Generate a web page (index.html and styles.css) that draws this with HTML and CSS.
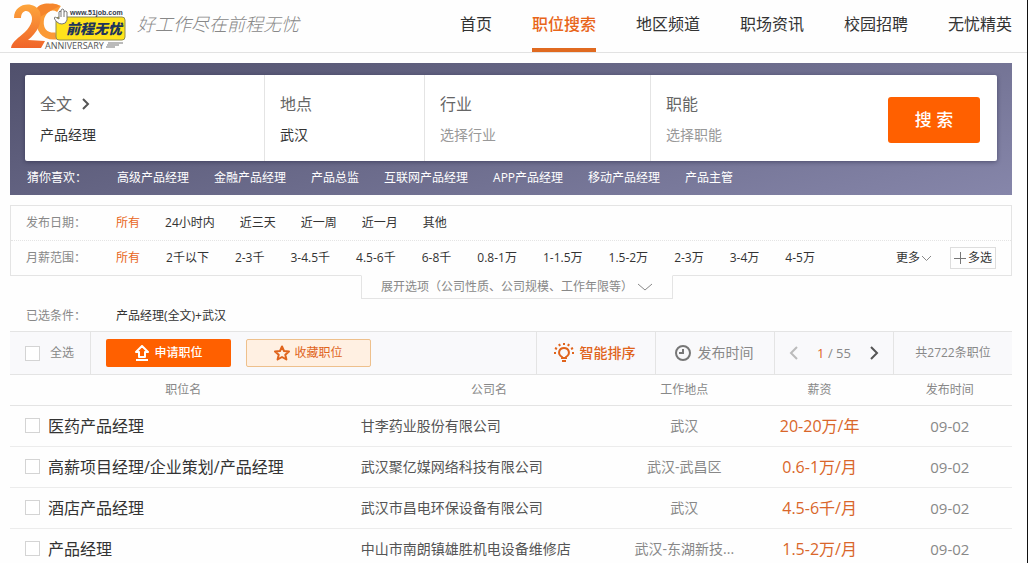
FILE: index.html
```html
<!DOCTYPE html>
<html lang="zh-CN">
<head>
<meta charset="utf-8">
<meta name="viewport" content="width=device-width, initial-scale=1">
<title>职位搜索 - 前程无忧</title>
<link rel="stylesheet" href="styles.css">
</head>
<body>
<header class="header">
  <a class="brand" href="#">
    <svg class="logo" viewBox="0 0 118 52" role="img" aria-label="前程无忧 20 ANNIVERSARY">
      <defs>
        <linearGradient id="ribbon" x1="0" y1="0" x2="0" y2="1">
          <stop offset="0" stop-color="#fda53c"/>
          <stop offset="1" stop-color="#f0642a"/>
        </linearGradient>
      </defs>
      <path d="M49 9C41 4 34 9 31 17C28 29 34 37 46 36" fill="none" stroke="#fb9a36" stroke-width="7"/>
      <path d="M26 9C30 3 40 2 50 6L42 10L30 17Z" fill="#f5852c"/>
      <path d="M4 18C4 3 24 0 30 12C33 22 27 33 18 40L35 41L31 48L1 48C2 41 9 38 15 32C22 25 24 18 20 13C17 9 11 11 11 18Z" fill="url(#ribbon)"/>
      <rect x="46" y="17" width="69" height="23" rx="3" fill="#ffe31b" stroke="#8e8a52"/>
      <path d="M47 22C43 18 44 16 47 18L49 19V12Q50 10 51 12V10Q53 8 54 10V12Q56 10 57 12V20Q56 24 52 24Q49 24 47 22Z" fill="#fff" stroke="#777" stroke-width="1"/>
      <path d="M51 12V17M54 12V17" stroke="#777"/>
      <text class="logo-url" x="60" y="15">www.51job.com</text>
      <text class="logo-name" x="56" y="34">前程无忧</text>
      <text class="logo-year" x="35" y="49">ANNIVERSARY</text>
      <path d="M98 43H113M97 45H109M96 47H105" stroke="#777" stroke-width="1"/>
    </svg>
    <span class="slogan">好工作尽在前程无忧</span>
  </a>
  <nav class="nav">
    <a href="#">首页</a>
    <a class="active" href="#">职位搜索</a>
    <a href="#">地区频道</a>
    <a href="#">职场资讯</a>
    <a href="#">校园招聘</a>
    <a href="#">无忧精英</a>
  </nav>
</header>

<main class="main">
  <section class="banner">
    <form class="search">
      <div class="field">
        <label for="keyword">全文
          <svg class="chevron" viewBox="0 0 8 12" aria-hidden="true"><path d="M1 1L6 6L1 11" fill="none" stroke="#555" stroke-width="2"/></svg>
        </label>
        <input id="keyword" type="text" value="产品经理">
      </div>
      <div class="field">
        <label for="place">地点</label>
        <input id="place" type="text" value="武汉">
      </div>
      <div class="field">
        <label for="trade">行业</label>
        <input id="trade" type="text" placeholder="选择行业">
      </div>
      <div class="field">
        <label for="role">职能</label>
        <input id="role" type="text" placeholder="选择职能">
      </div>
      <button class="search-button" type="button">搜 索</button>
    </form>
    <div class="suggest">
      <span class="suggest-title">猜你喜欢：</span>
      <a href="#">高级产品经理</a>
      <a href="#">金融产品经理</a>
      <a href="#">产品总监</a>
      <a href="#">互联网产品经理</a>
      <a href="#">APP产品经理</a>
      <a href="#">移动产品经理</a>
      <a href="#">产品主管</a>
    </div>
  </section>

  <section class="filters">
    <div class="filter-row">
      <span class="filter-title">发布日期：</span>
      <div class="options">
        <a class="chosen" href="#">所有</a>
        <a href="#">24小时内</a>
        <a href="#">近三天</a>
        <a href="#">近一周</a>
        <a href="#">近一月</a>
        <a href="#">其他</a>
      </div>
    </div>
    <div class="filter-row">
      <span class="filter-title">月薪范围：</span>
      <div class="options salary">
        <a class="chosen" href="#">所有</a>
        <a href="#">2千以下</a>
        <a href="#">2-3千</a>
        <a href="#">3-4.5千</a>
        <a href="#">4.5-6千</a>
        <a href="#">6-8千</a>
        <a href="#">0.8-1万</a>
        <a href="#">1-1.5万</a>
        <a href="#">1.5-2万</a>
        <a href="#">2-3万</a>
        <a href="#">3-4万</a>
        <a href="#">4-5万</a>
      </div>
      <button class="more" type="button">更多<svg viewBox="0 0 12 8" aria-hidden="true"><path d="M2 2L6.500 6.500L11 2" fill="none" stroke="#888"/></svg></button>
      <button class="multi" type="button"><svg viewBox="0 0 12 12" aria-hidden="true"><path d="M6.500 0V12M0 6.500H12" stroke="#777"/></svg>多选</button>
    </div>
  </section>
  <div class="expand-wrap">
    <button class="expand" type="button">展开选项（公司性质、公司规模、工作年限等）<svg viewBox="0 0 16 10" aria-hidden="true"><path d="M1 2L8 8L15 2" fill="none" stroke="#888"/></svg></button>
  </div>

  <div class="selected">
    <span class="filter-title">已选条件：</span>
    <span>产品经理(全文)+武汉</span>
  </div>

  <section class="toolbar">
    <label class="select-all"><input class="check" type="checkbox">全选</label>
    <div class="actions">
      <button class="apply" type="button"><svg viewBox="0 0 16 16" aria-hidden="true"><path d="M8 1L14 7H11V12H5V7H2Z" fill="none" stroke="#fff" stroke-width="2" stroke-linejoin="round"/><path d="M2 15H14" stroke="#fff" stroke-width="2"/></svg>申请职位</button>
      <button class="save" type="button"><svg viewBox="0 0 16 16" aria-hidden="true"><path d="M8 1.500L10 6L15 6.500L11.300 9.800L12.400 14.500L8 12L3.600 14.500L4.700 9.800L1 6.500L6 6Z" fill="none" stroke="#e0641c" stroke-width="2" stroke-linejoin="round"/></svg>收藏职位</button>
    </div>
    <button class="tool smart" type="button"><svg class="icon-bulb" viewBox="0 0 20 20" aria-hidden="true"><g fill="none" stroke="#e0641c" stroke-width="2"><path d="M8 15V14C3 11 5 5 10 5S17 11 12 14V15Z"/><path d="M8 18H12M10 0V2M5 1L6 3M15 1L14 3M1 5L3 6M19 5L17 6M0 10H2M18 10H20"/></g></svg>智能排序</button>
    <button class="tool" type="button"><svg class="icon-clock" viewBox="0 0 18 18" aria-hidden="true"><circle cx="9" cy="9" r="7" fill="none" stroke="#777" stroke-width="2"/><path d="M9 5V9H5" fill="none" stroke="#777" stroke-width="2"/></svg>发布时间</button>
    <div class="tool pager">
      <button type="button" aria-label="上一页"><svg viewBox="0 0 10 16" aria-hidden="true"><path d="M8 2L2 8L8 14" fill="none" stroke="#bbb" stroke-width="2"/></svg></button>
      <span><b>1</b> / 55</span>
      <button type="button" aria-label="下一页"><svg viewBox="0 0 10 16" aria-hidden="true"><path d="M2 2L8 8L2 14" fill="none" stroke="#555" stroke-width="2"/></svg></button>
    </div>
    <div class="tool total">共2722条职位</div>
  </section>

  <table class="jobs">
    <thead>
      <tr><th class="col-title">职位名</th><th class="col-company">公司名</th><th class="col-place">工作地点</th><th class="col-pay">薪资</th><th class="col-date">发布时间</th></tr>
    </thead>
    <tbody>
      <tr>
        <td class="title"><label><input class="check" type="checkbox">医药产品经理</label></td>
        <td class="company"><a href="#">甘李药业股份有限公司</a></td>
        <td>武汉</td><td class="pay">20-20万/年</td><td class="date">09-02</td>
      </tr>
      <tr>
        <td class="title"><label><input class="check" type="checkbox">高薪项目经理/企业策划/产品经理</label></td>
        <td class="company"><a href="#">武汉聚亿媒网络科技有限公司</a></td>
        <td>武汉-武昌区</td><td class="pay">0.6-1万/月</td><td class="date">09-02</td>
      </tr>
      <tr>
        <td class="title"><label><input class="check" type="checkbox">酒店产品经理</label></td>
        <td class="company"><a href="#">武汉市昌电环保设备有限公司</a></td>
        <td>武汉</td><td class="pay">4.5-6千/月</td><td class="date">09-02</td>
      </tr>
      <tr>
        <td class="title"><label><input class="check" type="checkbox">产品经理</label></td>
        <td class="company"><a href="#">中山市南朗镇雄胜机电设备维修店</a></td>
        <td>武汉-东湖新技...</td><td class="pay">1.5-2万/月</td><td class="date">09-02</td>
      </tr>
    </tbody>
  </table>
</main>
</body>
</html>
```
FILE: styles.css
```css
* {
  box-sizing: border-box;
}

body {
  margin: 0;
  min-height: 100vh;
  border-right: 1px solid #111;
  background: #fefefe;
  color: #333;
  font: 12px/20px "Open Sans", "Noto Sans CJK SC", sans-serif;
}

a {
  color: inherit;
  text-decoration: none;
}

button,
input {
  margin: 0;
  padding: 0;
  border: 0;
  background: none;
  color: inherit;
  font: inherit;
}

svg {
  flex: none;
}

/* Header */
.header {
  display: flex;
  justify-content: space-between;
  height: 53px;
  padding: 0 15px 0 10px;
  border-bottom: 1px solid #e2e2e2;
}

.brand {
  display: flex;
  gap: 9px;
}

.logo {
  width: 118px;
  height: 52px;
}

.logo-url {
  fill: #333a4a;
  font: bold 7px "Liberation Sans", sans-serif;
}

.logo-name {
  fill: #20345c;
  font: italic 900 14px "Noto Sans CJK SC", sans-serif;
}

.logo-year {
  fill: #555;
  font: 9px "Open Sans", sans-serif;
}

.slogan {
  color: #888;
  font-size: 18px;
  font-style: italic;
  font-weight: 300;
  line-height: 48px;
}

.nav {
  display: flex;
  gap: 40px;
  font-size: 16px;
  line-height: 48px;
}

.nav .active {
  border-bottom: 4px solid #e06a20;
  color: #e8651a;
  font-weight: 500;
}

/* Search banner */
.main {
  margin: 10px 15px 0 10px;
}

.banner {
  padding: 12px 15px 0;
  background: linear-gradient(165deg, #50506c, #6b6b8b 50%, #8686aa);
}

.search {
  display: grid;
  grid-template-columns: 240fr 160fr 226fr 237fr 92px;
  height: 86px;
  padding-right: 17px;
  border-radius: 2px;
  background: #fff;
  box-shadow: 0 1px 4px rgba(30, 30, 60, 0.5);
}

.field {
  display: flex;
  flex-direction: column;
  gap: 9px;
  min-width: 0;
  padding: 17px 15px 0;
  border-right: 1px solid #e4e4e4;
}

.field:nth-child(4) {
  border-right: 0;
}

.field label {
  display: flex;
  align-items: center;
  gap: 10px;
  color: #666;
  font-size: 16px;
  line-height: 24px;
}

.field input {
  width: 100%;
  font-size: 14px;
  line-height: 20px;
}

.field input::placeholder {
  color: #999;
}

.chevron {
  width: 8px;
  height: 12px;
}

.search-button {
  height: 46px;
  margin-top: 22px;
  border-radius: 3px;
  background: #ff6000;
  color: #fff;
  font-size: 17px;
  font-weight: 500;
}

.suggest {
  display: flex;
  gap: 25px;
  padding: 7px 2px;
  color: #fff;
}

.suggest-title {
  width: 65px;
}

/* Filters */
.filters {
  margin-top: 10px;
  border: 1px solid #e4e4e4;
}

.filter-row {
  display: flex;
  align-items: center;
  height: 34px;
  padding: 0 15px;
}

.filter-row + .filter-row {
  height: 35px;
  border-top: 1px dotted #e4e4e4;
}

.filter-title {
  width: 90px;
  color: #888;
}

.options {
  display: flex;
  flex: 1;
  gap: 25px;
}

.options.salary {
  gap: 26px;
}

.chosen {
  color: #e8651a;
}

.more,
.multi {
  display: flex;
  align-items: center;
}

.more svg {
  width: 12px;
  height: 8px;
}

.multi {
  gap: 2px;
  height: 22px;
  margin-left: 18px;
  padding: 0 3px;
  border: 1px solid #ddd;
}

.multi svg {
  width: 12px;
  height: 12px;
}

.expand-wrap {
  display: flex;
  justify-content: center;
  margin-top: -1px;
  padding-left: 12px;
}

.expand {
  display: flex;
  align-items: center;
  justify-content: center;
  gap: 4px;
  width: 312px;
  height: 24px;
  border: 1px solid #e4e4e4;
  border-top-color: #fefefe;
  background: #fefefe;
  color: #888;
}

.expand svg {
  width: 16px;
  height: 10px;
}

.selected {
  display: flex;
  padding: 7px 16px 5px;
}

/* Result toolbar */
.toolbar {
  display: flex;
  height: 44px;
  border: solid #e4e4e4;
  border-width: 1px 0;
  background: #f9f9fb;
  color: #888;
}

.check {
  flex: none;
  width: 15px;
  height: 15px;
  border: 1px solid #d4d4d4;
  background: #fff;
  appearance: none;
}

.select-all {
  display: flex;
  align-items: center;
  gap: 10px;
  width: 81px;
  padding-left: 15px;
  border-right: 1px solid #e4e4e4;
}

.actions {
  display: flex;
  flex: 1;
  align-items: center;
  gap: 15px;
  padding-left: 15px;
}

.apply,
.save {
  display: flex;
  align-items: center;
  justify-content: center;
  gap: 4px;
  width: 125px;
  height: 28px;
  border-radius: 2px;
}

.apply {
  background: #ff6000;
  color: #fff;
  font-weight: 500;
}

.save {
  border: 1px solid #eec08c;
  background: #fff0e2;
  color: #e0641c;
}

.apply svg,
.save svg {
  width: 16px;
  height: 16px;
}

.tool {
  display: flex;
  align-items: center;
  justify-content: center;
  gap: 6px;
  width: 119px;
  padding-right: 3px;
  border-left: 1px solid #e4e4e4;
  font-size: 14px;
}

.smart {
  color: #e0641c;
  font-weight: 500;
}

.icon-bulb {
  width: 20px;
  height: 20px;
}

.icon-clock {
  width: 18px;
  height: 18px;
}

.pager {
  gap: 18px;
  padding: 0;
  font-size: 13px;
}

.pager button {
  display: flex;
}

.pager svg {
  width: 10px;
  height: 16px;
}

.pager b {
  color: #e0641c;
  font-weight: 400;
}

.total {
  padding: 0;
  font-size: 12px;
}

/* Job list */
.jobs {
  width: 100%;
  border-collapse: collapse;
  table-layout: fixed;
  color: #888;
  font-size: 14px;
}

.jobs th {
  height: 30px;
  padding: 0 4px 0 0;
  border-bottom: 1px solid #e4e4e4;
  font-size: 12px;
  font-weight: 400;
}

.jobs td {
  height: 41px;
  padding: 0 4px 0 0;
  border-bottom: 1px solid #ececec;
  text-align: center;
  white-space: nowrap;
}

.col-title {
  width: 35%;
}

.col-company {
  width: 26%;
}

.col-place {
  width: 13%;
}

.col-pay {
  width: 14%;
}

.col-date {
  width: 12%;
}

.title label {
  display: flex;
  align-items: center;
  gap: 8px;
  padding-left: 15px;
  color: #333;
  font-size: 16px;
}

.jobs .company {
  color: #555;
  text-align: left;
}

.jobs .pay {
  color: #d9662a;
  font-size: 16px;
}

.jobs .date {
  font-size: 15px;
}
```
